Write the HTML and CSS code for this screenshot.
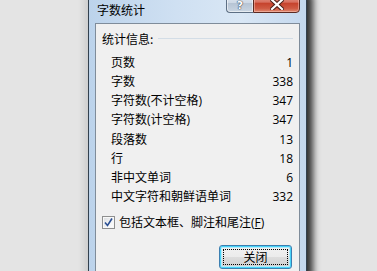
FILE: index.html
```html
<!DOCTYPE html>
<html lang="zh-CN">
<head>
<meta charset="utf-8">
<title>字数统计</title>
<link rel="stylesheet" href="styles.css">
</head>
<body>
<div class="desktop">
  <div class="window">
    <div class="titlebar">
      <span class="title">字数统计</span>
      <div class="caption-buttons">
        <div class="cbtn help"><span>?</span></div>
        <div class="cbtn close">
          <svg width="14" height="11" viewBox="0 0 14 11">
            <path d="M2 1 L12 10 M12 1 L2 10" stroke="#4a1f18" stroke-width="4.2" stroke-linecap="square" fill="none"/>
            <path d="M2 1 L12 10 M12 1 L2 10" stroke="#ffffff" stroke-width="2.2" stroke-linecap="square" fill="none"/>
          </svg>
        </div>
      </div>
    </div>
    <div class="client">
      <div class="section-head">
        <span>统计信息:</span>
        <span class="rule"></span>
      </div>
      <div class="stats">
        <div class="row"><span class="label">页数</span><span class="val">1</span></div>
        <div class="row"><span class="label">字数</span><span class="val">338</span></div>
        <div class="row"><span class="label">字符数(不计空格)</span><span class="val">347</span></div>
        <div class="row"><span class="label">字符数(计空格)</span><span class="val">347</span></div>
        <div class="row"><span class="label">段落数</span><span class="val">13</span></div>
        <div class="row"><span class="label">行</span><span class="val">18</span></div>
        <div class="row"><span class="label">非中文单词</span><span class="val">6</span></div>
        <div class="row"><span class="label">中文字符和朝鲜语单词</span><span class="val">332</span></div>
      </div>
      <div class="check-row">
        <span class="checkbox">
          <svg width="11" height="11" viewBox="0 0 11 11">
            <path d="M2 5.5 L4.5 8.5 L9 1.5" stroke="#2b4f93" stroke-width="1.6" fill="none"/>
          </svg>
        </span>
        <span class="check-label">包括文本框、脚注和尾注(<u>F</u>)</span>
      </div>
      <div class="actions">
        <div class="button"><span class="focus">关闭</span></div>
      </div>
    </div>
  </div>
</div>
</body>
</html>
```
FILE: styles.css
```css
html, body {
  margin: 0;
  padding: 0;
}
body {
  background: #e4e4e4;
  font-family: "Open Sans", "Noto Sans CJK SC", sans-serif;
  font-size: 12px;
  color: #000;
}
.desktop {
  position: relative;
  width: 377px;
  height: 271px;
  overflow: hidden;
  background: #e4e4e4;
}
.window {
  position: absolute;
  left: 88px;
  top: -8px;
  width: 219px;
  height: 300px;
  box-sizing: border-box;
  border: 1px solid #33414f;
  border-radius: 6px 6px 0 0;
  background: linear-gradient(to right, #bcd3eb 0%, #cfe0f2 40%, #d9e7f5 70%, #c4d8ee 100%);
  box-shadow: 7px 0 7px -1px rgba(0,0,0,0.78), -4px 0 7px rgba(0,0,0,0.10);
  display: flex;
  flex-direction: column;
}
.titlebar {
  position: relative;
  height: 30px;
  flex: none;
}
.title {
  display: block;
  padding: 10px 0 0 8px;
  line-height: 13px;
  font-family: "Noto Sans CJK SC", sans-serif;
  font-size: 12px;
  color: #000;
}
.caption-buttons {
  position: absolute;
  top: 0;
  right: 6px;
  display: flex;
}
.cbtn {
  height: 20px;
  box-sizing: border-box;
  display: flex;
  align-items: center;
  justify-content: center;
}
.help {
  width: 27px;
  border: 1px solid #5d6f84;
  border-right: none;
  border-radius: 0 0 0 4px;
  background: linear-gradient(to bottom, #e3ebf4 0%, #cdd8e5 50%, #b6c4d4 51%, #c9d5e2 100%);
  box-shadow: inset 0 0 0 1px rgba(255,255,255,0.55);
  align-items: flex-end;
  padding-bottom: 1px;
}
.help span {
  font-family: "DejaVu Sans", sans-serif;
  font-weight: bold;
  font-size: 11px;
  line-height: 11px;
  color: #ffffff;
  text-shadow: 0 0 1px #3d4b5c, 0 0 1px #3d4b5c, 0 0 1px #3d4b5c;
}
.close {
  width: 47px;
  border: 1px solid #5b2a22;
  border-radius: 0 0 4px 0;
  background: linear-gradient(to bottom, #e7a99d 0%, #d8705f 45%, #c6432d 52%, #cf5a43 80%, #e08a70 100%);
  box-shadow: inset 0 0 0 1px rgba(255,210,200,0.45);
}
.close svg {
  margin-top: 2px;
}
.client {
  flex: 1;
  margin: 0 6px;
  border: 1px solid #7f8c9a;
  border-bottom: none;
  background: #f0f0f0;
  padding: 4px 6px 0 6px;
  font-family: "Open Sans", "Noto Sans CJK SC", sans-serif;
}
.section-head {
  display: flex;
  align-items: center;
  height: 20px;
  font-family: "Noto Sans CJK SC", sans-serif;
}
.rule {
  flex: 1;
  height: 1px;
  margin-left: 5px;
  background: #d3dde6;
}
.stats {
  margin-top: 5px;
  padding-left: 9px;
}
.row {
  display: flex;
  justify-content: space-between;
  align-items: center;
  height: 19.14px;
  line-height: 19px;
}
.val {
  font-family: "Open Sans", sans-serif;
}
.check-row {
  display: flex;
  align-items: center;
  margin-top: 10px;
  height: 13px;
}
.checkbox {
  width: 13px;
  height: 13px;
  box-sizing: border-box;
  border: 1px solid #8e8f8f;
  background: linear-gradient(135deg, #d9dcdf 0%, #f4f5f6 60%, #ffffff 100%);
  box-shadow: inset 0 0 0 1px #f8f8f8;
  display: flex;
  align-items: center;
  justify-content: center;
}
.check-label {
  margin-left: 4px;
  line-height: 16px;
}
.check-label u {
  text-decoration: underline;
  text-underline-offset: 1px;
}
.actions {
  display: flex;
  justify-content: flex-end;
  margin-top: 16px;
  padding-right: 1px;
}
.button {
  width: 73px;
  height: 24px;
  box-sizing: border-box;
  border: 1px solid #3c7fb1;
  border-radius: 3px;
  background: linear-gradient(to bottom, #f2f2f2 0%, #ebebeb 50%, #dddddd 51%, #cfcfcf 100%);
  box-shadow: inset 0 0 0 1px #48d3f8, inset 0 0 0 2px #b6ecfb;
  padding: 3px;
  display: flex;
}
.focus {
  flex: 1;
  border: 1px dotted #000;
  display: flex;
  align-items: center;
  justify-content: center;
  font-family: "Noto Sans CJK SC", sans-serif;
  line-height: 14px;
}
```
